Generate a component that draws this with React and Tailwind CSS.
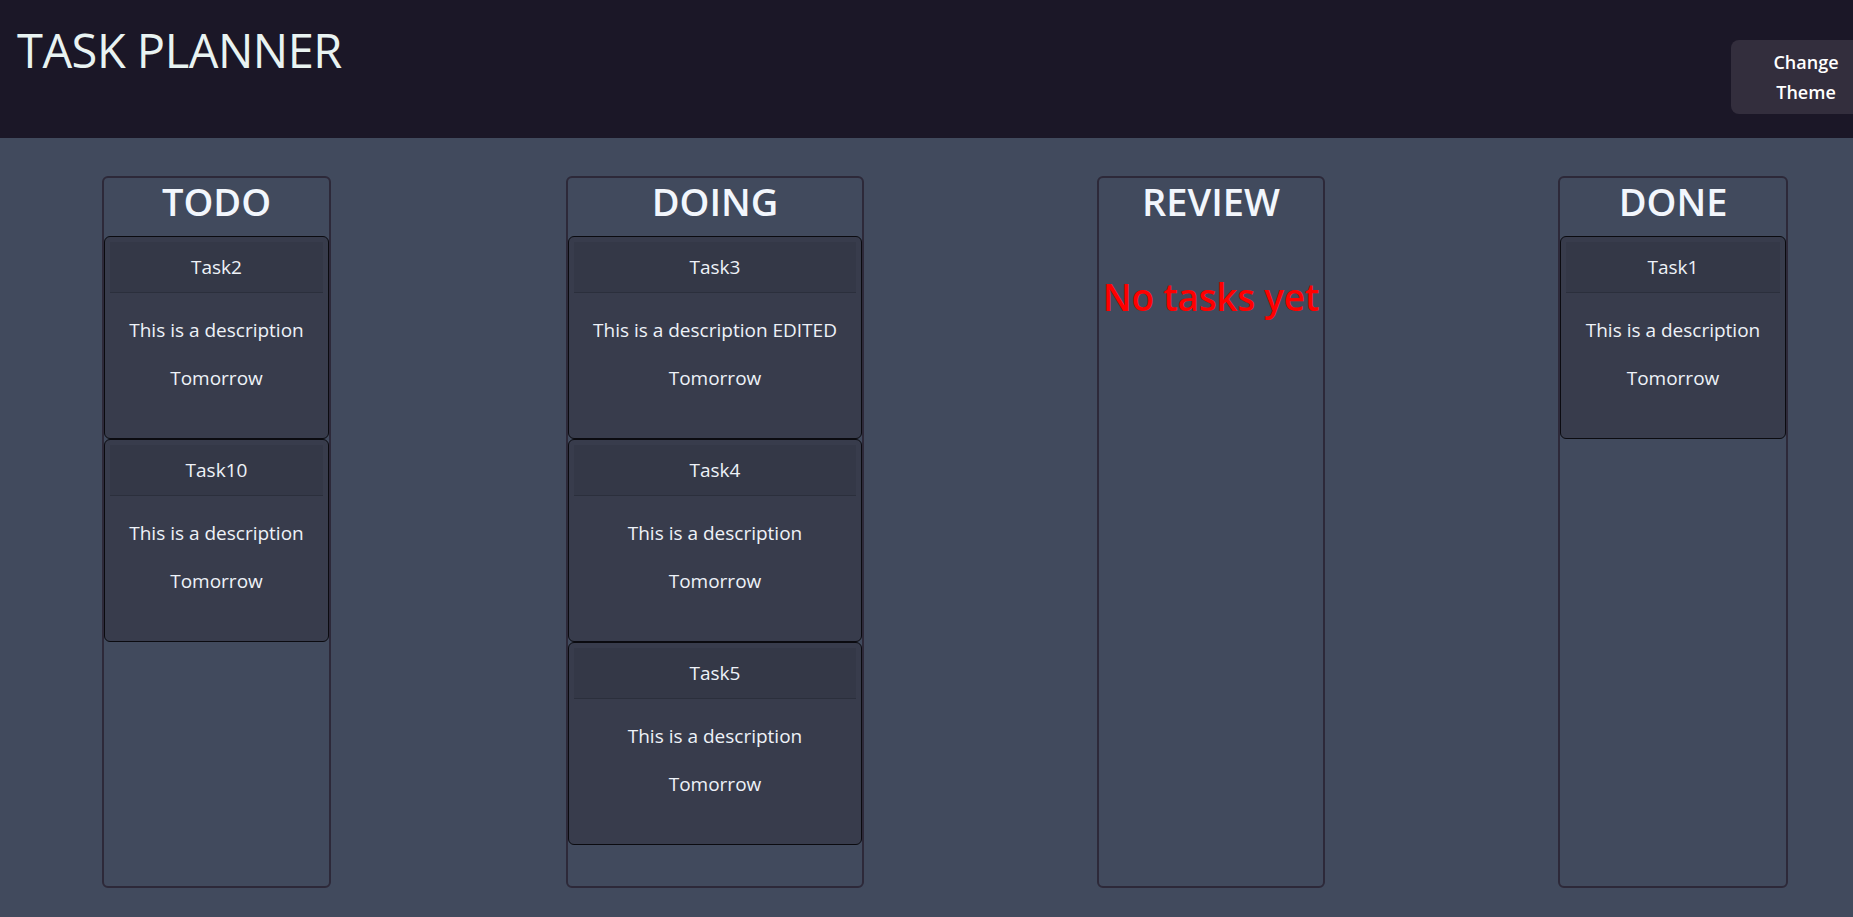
const columns = [
  { title: "TODO", width: "w-[229px]", gap: "ml-0", tasks: [
    { name: "Task2", desc: "This is a description", due: "Tomorrow" },
    { name: "Task10", desc: "This is a description", due: "Tomorrow" },
  ] },
  { title: "DOING", width: "w-[298px]", gap: "ml-[235px]", tasks: [
    { name: "Task3", desc: "This is a description EDITED", due: "Tomorrow" },
    { name: "Task4", desc: "This is a description", due: "Tomorrow" },
    { name: "Task5", desc: "This is a description", due: "Tomorrow" },
  ] },
  { title: "REVIEW", width: "w-[228px]", gap: "ml-[233px]", tasks: [] },
  { title: "DONE", width: "w-[230px]", gap: "ml-[233px]", tasks: [
    { name: "Task1", desc: "This is a description", due: "Tomorrow" },
  ] },
];

function TaskCard({ task }) {
  return (
    <div className="h-[203px] rounded-[6px] border border-[#0b0b10] bg-[#383c4c] p-[5px] text-center">
      <div className="flex h-[51px] items-center justify-center border-b border-[#2b2f3c] bg-[#343847] text-[19px]">
        {task.name}
      </div>
      <div className="pt-[23px]">
        <p className="mb-[19px] whitespace-nowrap leading-[29px] text-[19px]">{task.desc}</p>
        <p className="leading-[29px] text-[19px]">{task.due}</p>
      </div>
    </div>
  );
}

function Column({ col }) {
  return (
    <div className={`${col.width} ${col.gap} flex h-[712px] shrink-0 flex-col rounded-[6px] border-2 border-[#2d2939]`}>
      <h2 className="mb-[12px] text-center text-[38px] font-semibold leading-[46px] text-[#f2f6fc]">
        {col.title}
      </h2>
      {col.tasks.length === 0 ? (
        <p className="mt-[38px] whitespace-nowrap text-center text-[37px] font-semibold leading-[46px] tracking-[-0.3px] text-[#ff0000]">
          No tasks yet
        </p>
      ) : (
        col.tasks.map((t) => <TaskCard key={t.name} task={t} />)
      )}
    </div>
  );
}

export default function App() {
  return (
    <div className="min-h-screen bg-[#414a5d] text-[#eef2f8]" style={{ fontFamily: '"Open Sans", "Noto Sans", sans-serif' }}>
      <header className="flex h-[138px] items-start justify-between overflow-hidden bg-[#1b1727]">
        <h1 className="ml-[17px] mt-[21px] text-[47px] font-normal leading-[58px] tracking-[-0.5px] text-[#e9f3f2]">
          TASK PLANNER
        </h1>
        <button className="mr-[-28px] mt-[40px] flex h-[74px] w-[150px] flex-col items-center justify-center rounded-[8px] bg-[#332e3d] text-[18px] font-semibold leading-[30px] text-white">
          <span>Change</span>
          <span>Theme</span>
        </button>
      </header>
      <main className="flex items-start pl-[102px] pt-[38px]">
        {columns.map((c) => (
          <Column key={c.title} col={c} />
        ))}
      </main>
    </div>
  );
}
